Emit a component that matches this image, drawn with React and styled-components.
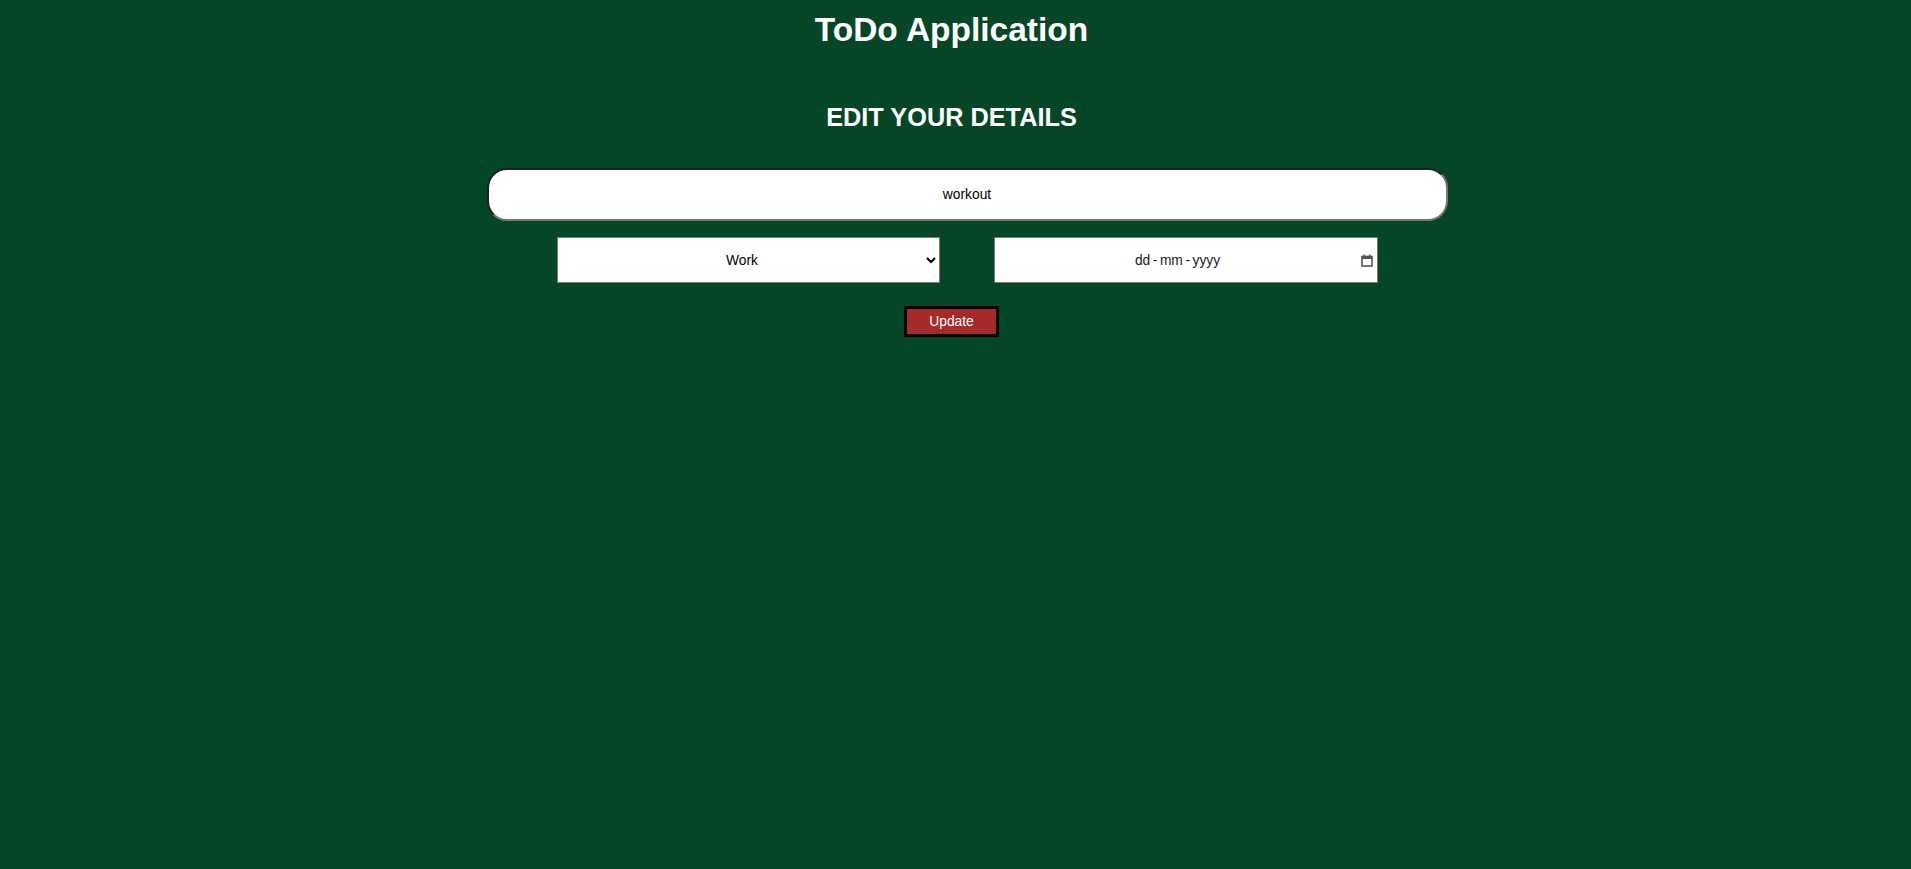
import React, { useState } from 'react'
import styled, { createGlobalStyle } from 'styled-components'

const GlobalStyle = createGlobalStyle`
  body {
    margin: 0;
    background-color: #054626;
    font-family: "Liberation Sans", Arial, sans-serif;
  }
`
const Page = styled.div`
  display: flex;
  flex-direction: column;
  align-items: center;
  padding-right: 8px;
  min-height: 869px;
  box-sizing: border-box;
`
const Title = styled.h1`
  margin: 11px 0 0;
  font-size: 33.5px;
  font-weight: bold;
  color: #ffffff;
`
const SubTitle = styled.h2`
  margin: 54px 0 0;
  font-size: 25.3px;
  font-weight: bold;
  color: #ffffff;
`
const Form = styled.form`
  display: flex;
  flex-direction: column;
  align-items: center;
  margin-top: 36px;
`
const Fields = styled.div`
  display: flex;
  flex-direction: column;
  align-items: center;
  padding-left: 31px;
`
const TaskInput = styled.input`
  width: 961px;
  height: 53px;
  box-sizing: border-box;
  border-width: 2px;
  border-style: solid;
  border-color: #1f1f1f #767676 #767676 #1f1f1f;
  border-radius: 20px;
  background-color: #fff;
  font-family: "Liberation Sans", Arial, sans-serif;
  font-size: 13.8px;
  color: #000;
  text-align: center;
  outline: none;
`
const Row = styled.div`
  display: flex;
  gap: 54px;
  margin-top: 16px;
`
const Select = styled.select`
  width: 383px;
  height: 46px;
  box-sizing: border-box;
  border: 1px solid #767676;
  border-radius: 0;
  background-color: #fff;
  font-family: "Liberation Sans", Arial, sans-serif;
  font-size: 13.8px;
  color: #000;
  text-align: center;
  padding: 0 4px;
`
const DateField = styled.div`
  width: 384px;
  height: 46px;
  box-sizing: border-box;
  border: 1px solid #767676;
  background-color: #fff;
  display: flex;
  align-items: center;
  padding: 0 4px 0 0;
  font-size: 13.8px;
  color: #1a1a1a;
`
const DateText = styled.span`
  flex: 1;
  text-align: center;
`
const Sep = styled.span`
  margin: 0 2.5px;
`
const CalendarIcon = () => (
  <svg width="12" height="13" viewBox="0 0 12 13">
    <rect x="1" y="2.5" width="10" height="9.5" fill="none" stroke="#555" strokeWidth="1.6" />
    <rect x="1" y="2.5" width="10" height="2.5" fill="#555" />
    <rect x="2.5" y="0.5" width="1.6" height="2.5" fill="#555" />
    <rect x="7.9" y="0.5" width="1.6" height="2.5" fill="#555" />
  </svg>
)
const UpdateButton = styled.button`
  margin-top: 23px;
  padding: 5px 22.5px;
  border: 3px solid #000;
  background-color: #a52a2a;
  color: #fff;
  font-family: "Liberation Sans", Arial, sans-serif;
  font-size: 13.8px;
  cursor: pointer;
`

const App = () => {
  const [title, setTitle] = useState('workout')
  const [category, setCategory] = useState('Work')

  return <>
    <GlobalStyle />
    <Page>
      <Title>ToDo Application</Title>
      <SubTitle>EDIT YOUR DETAILS</SubTitle>
      <Form onSubmit={e => e.preventDefault()}>
        <Fields>
          <TaskInput value={title} onChange={e => setTitle(e.target.value)} />
          <Row>
            <Select value={category} onChange={e => setCategory(e.target.value)}>
              <option>Work</option>
              <option>Personal</option>
              <option>Shopping</option>
            </Select>
            <DateField>
              <DateText>dd<Sep>-</Sep>mm<Sep>-</Sep>yyyy</DateText>
              <CalendarIcon />
            </DateField>
          </Row>
        </Fields>
        <UpdateButton type="submit">Update</UpdateButton>
      </Form>
    </Page>
  </>
}

export default App
